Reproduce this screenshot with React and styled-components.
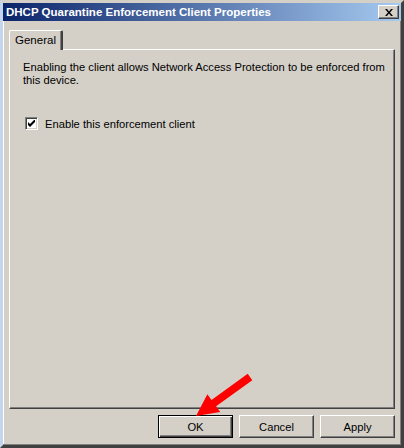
import React from 'react';
import styled, { createGlobalStyle } from 'styled-components';

const Global = createGlobalStyle`
  html, body {
    margin: 0;
    padding: 0;
    background: #d4d0c8;
  }
  body {
    font-family: 'Liberation Sans', Arial, sans-serif;
    font-size: 11px;
    color: #000;
  }
`;

const Window = styled.div`
  position: relative;
  width: 404px;
  height: 448px;
  box-sizing: border-box;
  display: flex;
  flex-direction: column;
  background: #d4d0c8;
  border-top: 3px solid #d4d0c8;
  border-left: 3px solid #c4d6ee;
  border-right: 3px solid #404040;
  border-bottom: 3px solid #404040;
  box-shadow: inset -1px -1px 0 #808080, inset 1px 1px 0 #fff;
`;

const TitleBar = styled.div`
  height: 18px;
  display: flex;
  align-items: center;
  justify-content: space-between;
  padding: 0 2px 0 3px;
  background: linear-gradient(to right, #0a246a, #a6caf0);
`;

const Title = styled.span`
  color: #fff;
  font-weight: bold;
  font-size: 11.5px;
  white-space: nowrap;
`;

const CloseButton = styled.div`
  width: 19px;
  height: 12px;
  background: #d4d0c8;
  border: 1px solid;
  border-color: #fff #404040 #404040 #fff;
  box-shadow: inset -1px -1px 0 #808080;
  display: flex;
  align-items: center;
  justify-content: center;
`;

const Body = styled.div`
  flex: 1;
  display: flex;
  flex-direction: column;
  padding: 8px 6px 7px 6px;
`;

const TabStrip = styled.div`
  display: flex;
  height: 20px;
  align-items: flex-end;
`;

const Tab = styled.div`
  width: 54px;
  height: 20px;
  box-sizing: border-box;
  border-top: 1px solid #fff;
  border-left: 1px solid #fff;
  border-right: 2px solid #404040;
  box-shadow: inset -1px 0 0 #808080;
  border-radius: 2px 2px 0 0;
  display: flex;
  align-items: center;
  justify-content: center;
  margin-bottom: -1px;
  background: #d4d0c8;
  position: relative;
  z-index: 1;
  padding-bottom: 1px;
  font-size: 11.5px;
`;

const Panel = styled.div`
  height: 360px;
  box-sizing: border-box;
  border: 1px solid;
  border-color: #fff #404040 #404040 #fff;
  box-shadow: inset -1px -1px 0 #808080;
  padding: 11px 4px 0 13px;
`;

const Description = styled.p`
  margin: 0;
  line-height: 13px;
  font-size: 11.2px;
`;

const CheckRow = styled.label`
  display: flex;
  align-items: center;
  gap: 7px;
  margin-top: 30px;
  margin-left: 2px;
  font-size: 11.2px;
`;

const Box = styled.span`
  width: 13px;
  height: 13px;
  box-sizing: border-box;
  background: #fff;
  border: 1px solid;
  border-color: #808080 #fff #fff #808080;
  box-shadow: inset 1px 1px 0 #404040, inset -1px -1px 0 #d4d0c8;
  display: flex;
  align-items: center;
  justify-content: center;
`;

const ButtonRow = styled.div`
  display: flex;
  justify-content: flex-end;
  gap: 6px;
  margin-top: auto;
`;

const Button = styled.div`
  width: 75px;
  height: 23px;
  box-sizing: border-box;
  display: flex;
  align-items: center;
  justify-content: center;
  background: #d4d0c8;
  font-size: 11.2px;
  border: 1px solid;
  border-color: ${(p) => (p.$default ? '#000' : '#fff #404040 #404040 #fff')};
  box-shadow: ${(p) =>
    p.$default
      ? 'inset 1px 1px 0 #fff, inset -1px -1px 0 #404040, inset -2px -2px 0 #808080'
      : 'inset -1px -1px 0 #808080'};
`;

const Arrow = styled.svg`
  position: absolute;
  left: -3px;
  top: -3px;
  pointer-events: none;
`;

export default function App() {
  return (
    <>
      <Global />
      <Window>
        <TitleBar>
          <Title>DHCP Quarantine Enforcement Client Properties</Title>
          <CloseButton>
            <svg width="8" height="7" viewBox="0 0 8 7">
              <path d="M0 0h2l2 2.5L6 0h2L5 3.5 8 7H6L4 4.5 2 7H0l3-3.5z" fill="#000" />
            </svg>
          </CloseButton>
        </TitleBar>
        <Body>
          <TabStrip>
            <Tab>General</Tab>
          </TabStrip>
          <Panel>
            <Description>
              Enabling the client allows Network Access Protection to be enforced from this device.
            </Description>
            <CheckRow>
              <Box>
                <svg width="7" height="7" viewBox="0 0 7 7">
                  <path d="M0 2v3l2 2 5-5V-1L2 4z" fill="#000" />
                </svg>
              </Box>
              Enable this enforcement client
            </CheckRow>
          </Panel>
          <ButtonRow>
            <Button $default>OK</Button>
            <Button>Cancel</Button>
            <Button>Apply</Button>
          </ButtonRow>
        </Body>
        <Arrow width="404" height="448" viewBox="0 0 404 448">
          <polygon
            points="247.7,373.8 211.5,399.9 207.4,394.2 196,416 220.2,412 216.1,406.3 252.3,380.2"
            fill="#f00"
          />
        </Arrow>
      </Window>
    </>
  );
}
